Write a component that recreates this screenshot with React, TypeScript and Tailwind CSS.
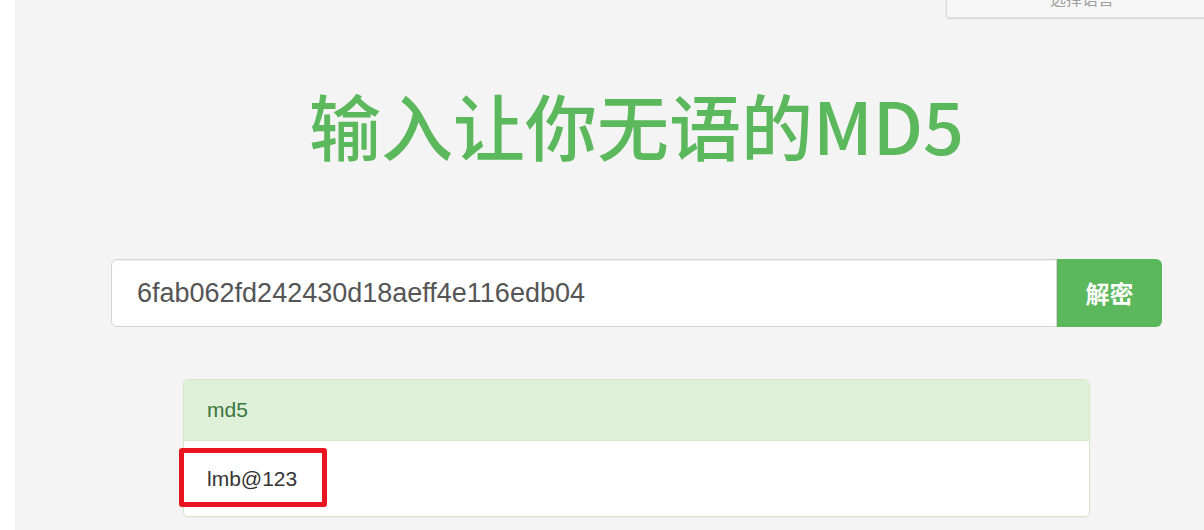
export default function App() {
  return (
    <div className="flex h-[530px] overflow-hidden bg-white">
      <div className="w-[15px] shrink-0 bg-white" />
      <div className="relative flex-1 bg-[#f4f4f4]">
        {/* language picker, scrolled half out of view */}
        <div className="absolute right-[-14px] top-[-22px] flex h-[40px] w-[272px] items-center justify-center rounded-bl-[3px] border border-[#dcdcdc] bg-[#f7f7f7] shadow-[0_1px_2px_rgba(0,0,0,0.12)]">
          <span className="text-[16px] text-[#a0a0a0] [font-family:'Noto_Sans_CJK_SC',sans-serif]">选择语言</span>
        </div>

        <div className="ml-[96px] w-[1051px] pt-[88px]">
          <h1 className="text-center text-[72px] font-medium leading-none text-[#5cb85c] [font-family:'Noto_Sans_CJK_SC',sans-serif]">
            输入让你无语的MD5
          </h1>

          <div className="mt-[99px] flex h-[68px]">
            <div className="flex flex-1 items-center rounded-l-[6px] border border-[#d4d4d4] bg-white pl-[25px] shadow-[inset_0_1px_1px_rgba(0,0,0,0.06)]">
              <span className="text-[27px] text-[#555] [font-family:'Liberation_Sans',sans-serif]">
                6fab062fd242430d18aeff4e116edb04
              </span>
            </div>
            <button className="w-[105px] rounded-r-[6px] bg-[#5cb85c] text-[24px] font-bold text-white [font-family:'Noto_Sans_CJK_SC',sans-serif]">
              解密
            </button>
          </div>

          <div className="mx-[72px] mt-[52px] rounded-[5px] border border-[#d6e9c6] bg-white shadow-[0_1px_2px_rgba(0,0,0,0.05)]">
            <div className="flex h-[61px] items-center rounded-t-[5px] border-b border-[#d6e9c6] bg-[#dff0d8] px-[23px]">
              <span className="text-[21px] text-[#3c763d] [font-family:'Liberation_Sans',sans-serif]">md5</span>
            </div>
            <div className="relative flex h-[75px] items-center px-[23px]">
              <span className="text-[21px] text-[#333] [font-family:'Liberation_Sans',sans-serif]">lmb@123</span>
              <div className="absolute left-[-5px] top-[7px] h-[59px] w-[148px] rounded-[3px] border-[5px] border-[#e8141f]" />
            </div>
          </div>
        </div>
      </div>
    </div>
  )
}
